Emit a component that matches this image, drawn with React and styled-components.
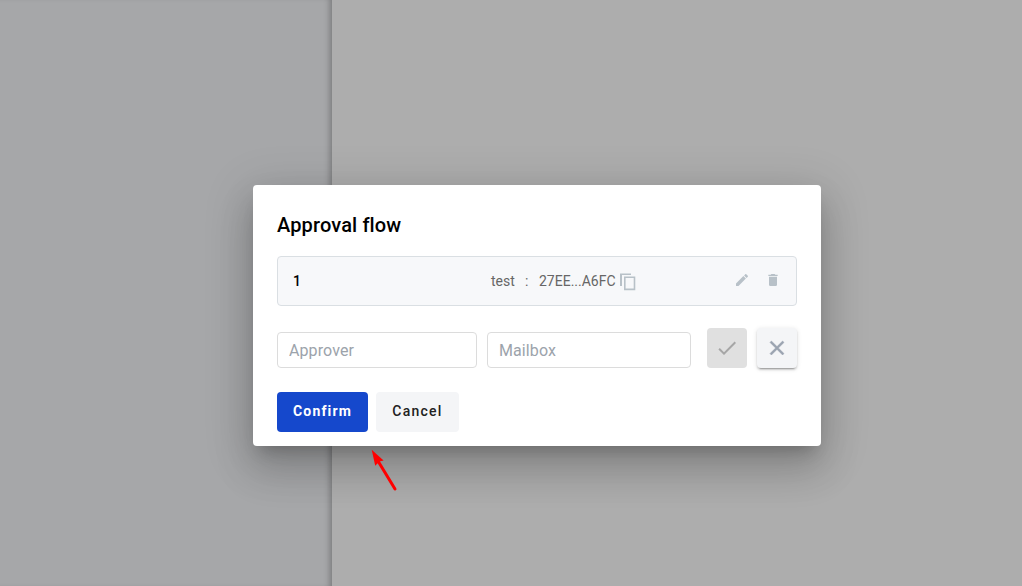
import React from 'react';
import styled, { createGlobalStyle } from 'styled-components';

const Global = createGlobalStyle`
  *, *::before, *::after { box-sizing: border-box; }
  body { margin: 0; font-family: Roboto, sans-serif; background: #adadad; overflow: hidden; }
`;

const Page = styled.div`
  display: flex;
  height: 100vh;
  position: relative;
  overflow: hidden;
`;
const Sidebar = styled.aside`
  width: 332px;
  background: #a6a7a9;
  box-shadow: inset -6px 0 6px -4px rgba(0, 0, 0, 0.28);
`;
const Main = styled.main`
  flex: 1;
  background: #adadad;
`;

/* The dialog floats over the page behind it. */
const Dialog = styled.section`
  position: absolute;
  left: 253px;
  top: 185px;
  width: 568px;
  height: 261px;
  padding: 24px;
  background: #fff;
  border-radius: 4px;
  box-shadow: 0 11px 15px -7px rgba(0, 0, 0, 0.2), 0 24px 38px 3px rgba(0, 0, 0, 0.14),
    0 9px 46px 8px rgba(0, 0, 0, 0.12);
`;
const Title = styled.h2`
  margin: 0 0 15px;
  font-size: 20px;
  line-height: 32px;
  font-weight: 500;
  letter-spacing: 0.13px;
  color: #000;
`;
const Step = styled.div`
  display: flex;
  align-items: center;
  width: 520px;
  height: 50px;
  padding: 0 15px;
  border: 1px solid #dadfe3;
  border-radius: 4px;
  background: #f7f8fa;
  font-size: 14px;
  color: #666;
`;
const StepNumber = styled.span`
  width: 198px;
  font-weight: 500;
  color: #000;
`;
const Name = styled.span`
  width: 34px;
`;
const Colon = styled.span`
  width: 14px;
`;
const Address = styled.span`
  width: 80px;
`;
const CopySlot = styled.span`
  padding-top: 2px;
`;
const StepActions = styled.div`
  display: flex;
  gap: 15px;
  margin: -2px 0 0 auto;
`;
const Icon = styled.svg`
  display: block;
  flex: none;
  width: ${(p) => p.$size}px;
  height: ${(p) => p.$size}px;
  fill: ${(p) => p.$color || '#b8c1c8'};
`;

const Form = styled.div`
  display: flex;
  align-items: flex-end;
  margin-top: 22px;
`;
const Input = styled.input`
  width: ${(p) => p.$width}px;
  height: 36px;
  margin-right: ${(p) => p.$gap}px;
  padding: 1px 11px 0;
  border: 1px solid #dcdcdc;
  border-radius: 4px;
  outline: none;
  background: #fff;
  font: 16px Roboto, sans-serif;
  letter-spacing: 0.1px;
  &::placeholder { color: #9ca3ab; opacity: 1; }
`;
const IconButton = styled.button`
  display: flex;
  align-items: center;
  justify-content: center;
  width: 40px;
  height: 40px;
  padding: 0;
  border: 0;
  border-radius: 4px;
  background: ${(p) => (p.$raised ? '#f4f5f7' : '#e0e0e0')};
  margin-left: ${(p) => (p.$raised ? 10 : 0)}px;
  box-shadow: ${(p) =>
    p.$raised
      ? '0 3px 1px -2px rgba(0,0,0,.2), 0 2px 2px 0 rgba(0,0,0,.14), 0 1px 5px 0 rgba(0,0,0,.12)'
      : 'none'};
`;
const Footer = styled.div`
  display: flex;
  gap: 8px;
  margin-top: 24px;
`;
const Button = styled.button`
  width: ${(p) => p.$width}px;
  height: 40px;
  padding: 0 0 2px;
  border: 0;
  border-radius: 4px;
  background: ${(p) => (p.$primary ? '#1548cc' : '#f4f5f7')};
  color: ${(p) => (p.$primary ? '#fff' : '#212121')};
  font: ${(p) => (p.$primary ? 700 : 500)} 14px Roboto, sans-serif;
  letter-spacing: ${(p) => (p.$primary ? 1.15 : 1.25)}px;
`;
const Pointer = styled.svg`
  position: absolute;
  left: 368px;
  top: 446px;
  width: 32px;
  height: 48px;
`;

export default function App() {
  return (
    <>
      <Global />
      <Page>
        <Sidebar />
        <Main />
        <Dialog>
          <Title>Approval flow</Title>
          <Step>
            <StepNumber>1</StepNumber>
            <Name>test</Name>
            <Colon>:</Colon>
            <Address>27EE...A6FC</Address>
            <CopySlot>
              <Icon $size={18} viewBox="0 0 18 18">
                <path fillRule="evenodd" d="M1 .5h11V2H3v11H1zM5 3.5h11.3v13.7H5zM6.6 5.1v10.5h8.1V5.1z" />
              </Icon>
            </CopySlot>
            <StepActions>
              <Icon $size={16} viewBox="0 0 24 24">
                <path d="M20.71 7.04c.39-.39.39-1.04 0-1.41l-2.34-2.34c-.37-.39-1.02-.39-1.41 0l-1.84 1.83 3.75 3.75M3 17.25V21h3.75L17.81 9.93l-3.75-3.75L3 17.25z" />
              </Icon>
              <Icon $size={16} viewBox="0 0 24 24">
                <path d="M19 4h-3.5l-1-1h-5l-1 1H5v2h14M6 19a2 2 0 0 0 2 2h8a2 2 0 0 0 2-2V7H6v12z" />
              </Icon>
            </StepActions>
          </Step>
          <Form>
            <Input $width={200} $gap={10} placeholder="Approver" />
            <Input $width={204} $gap={16} placeholder="Mailbox" />
            <IconButton disabled>
              <Icon $size={24} $color="#a6a6a6" viewBox="0 0 24 24">
                <path d="M9 16.17L4.83 12l-1.42 1.41L9 19 21 7l-1.41-1.41z" />
              </Icon>
            </IconButton>
            <IconButton $raised>
              <Icon $size={24} $color="#9aa3b0" viewBox="0 0 24 24">
                <path
                  d="M19 6.41L17.59 5 12 10.59 6.41 5 5 6.41 10.59 12 5 17.59 6.41 19 12 13.41 17.59 19 19 17.59 13.41 12z"
                  stroke="#9aa3b0"
                  strokeWidth="0.5"
                />
              </Icon>
            </IconButton>
          </Form>
          <Footer>
            <Button $primary $width={91}>Confirm</Button>
            <Button $width={83}>Cancel</Button>
          </Footer>
        </Dialog>
        <Pointer viewBox="0 0 32 48">
          <path d="M10 15L27 43" stroke="#f00" strokeWidth="3" strokeLinecap="round" fill="none" />
          <path d="M3.7 3.7L15.6 14.4L11.5 15.5L7.2 19.7Z" fill="#f00" />
        </Pointer>
      </Page>
    </>
  );
}
